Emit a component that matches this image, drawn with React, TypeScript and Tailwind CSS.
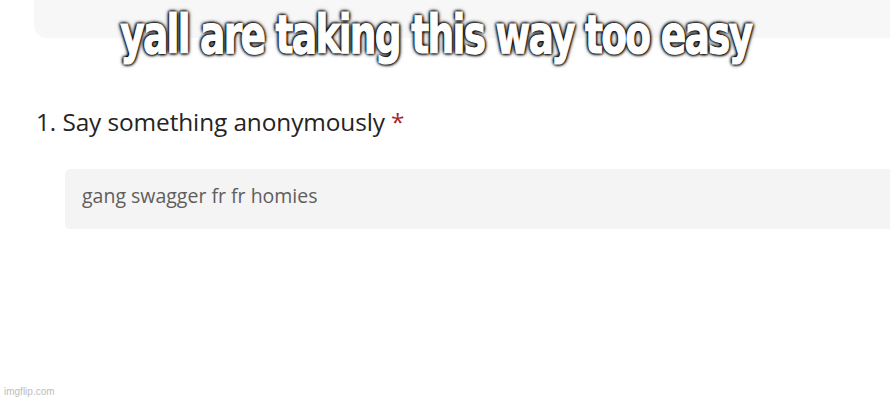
import React from "react";

export default function App() {
  return (
    <div className="relative w-[890px] h-[403px] bg-white overflow-hidden" style={{ fontFamily: '"Open Sans", "Noto Sans", sans-serif' }}>
      <div className="ml-[34px] h-[38px] bg-[#f7f7f7] rounded-bl-[12px]" />
      <div className="pl-[36px] pt-[68px]">
        <div className="text-[24.4px] leading-[32px] text-[#252423] tracking-[-0.1px]">
          1. Say something anonymously <span className="text-[#a4262c]">*</span>
        </div>
        <div className="ml-[29px] mt-[31px] h-[60px] bg-[#f4f4f4] rounded-l-[5px] flex items-center pl-[17px] pb-[7px] text-[19.5px] text-[#605e5c]">
          gang swagger fr fr homies
        </div>
      </div>
      <div className="absolute left-[4px] bottom-[4px] text-[10px] text-[#bdbdbd]" style={{ fontFamily: '"Liberation Sans", Arial, sans-serif' }}>
        imgflip.com
      </div>
      <div className="absolute left-0 right-0 top-[8px] flex justify-center">
        <div
          className="text-white font-bold text-[48px] leading-[56px] origin-[50%_80%] scale-x-[0.87] scale-y-[1.12] whitespace-nowrap ml-[-18px]"
          style={{
            fontFamily: '"DejaVu Sans Condensed", "Liberation Sans Narrow", "DejaVu Sans", sans-serif',
            textShadow: "0 0 3px #000, 0 0 3px #000, 0 0 5px #000, 1px 1px 3px #000, -1px -1px 3px #000",
            letterSpacing: "-2px",
            WebkitTextStroke: "1px #fff",
          }}
        >
          yall are taking this way too easy
        </div>
      </div>
    </div>
  );
}
